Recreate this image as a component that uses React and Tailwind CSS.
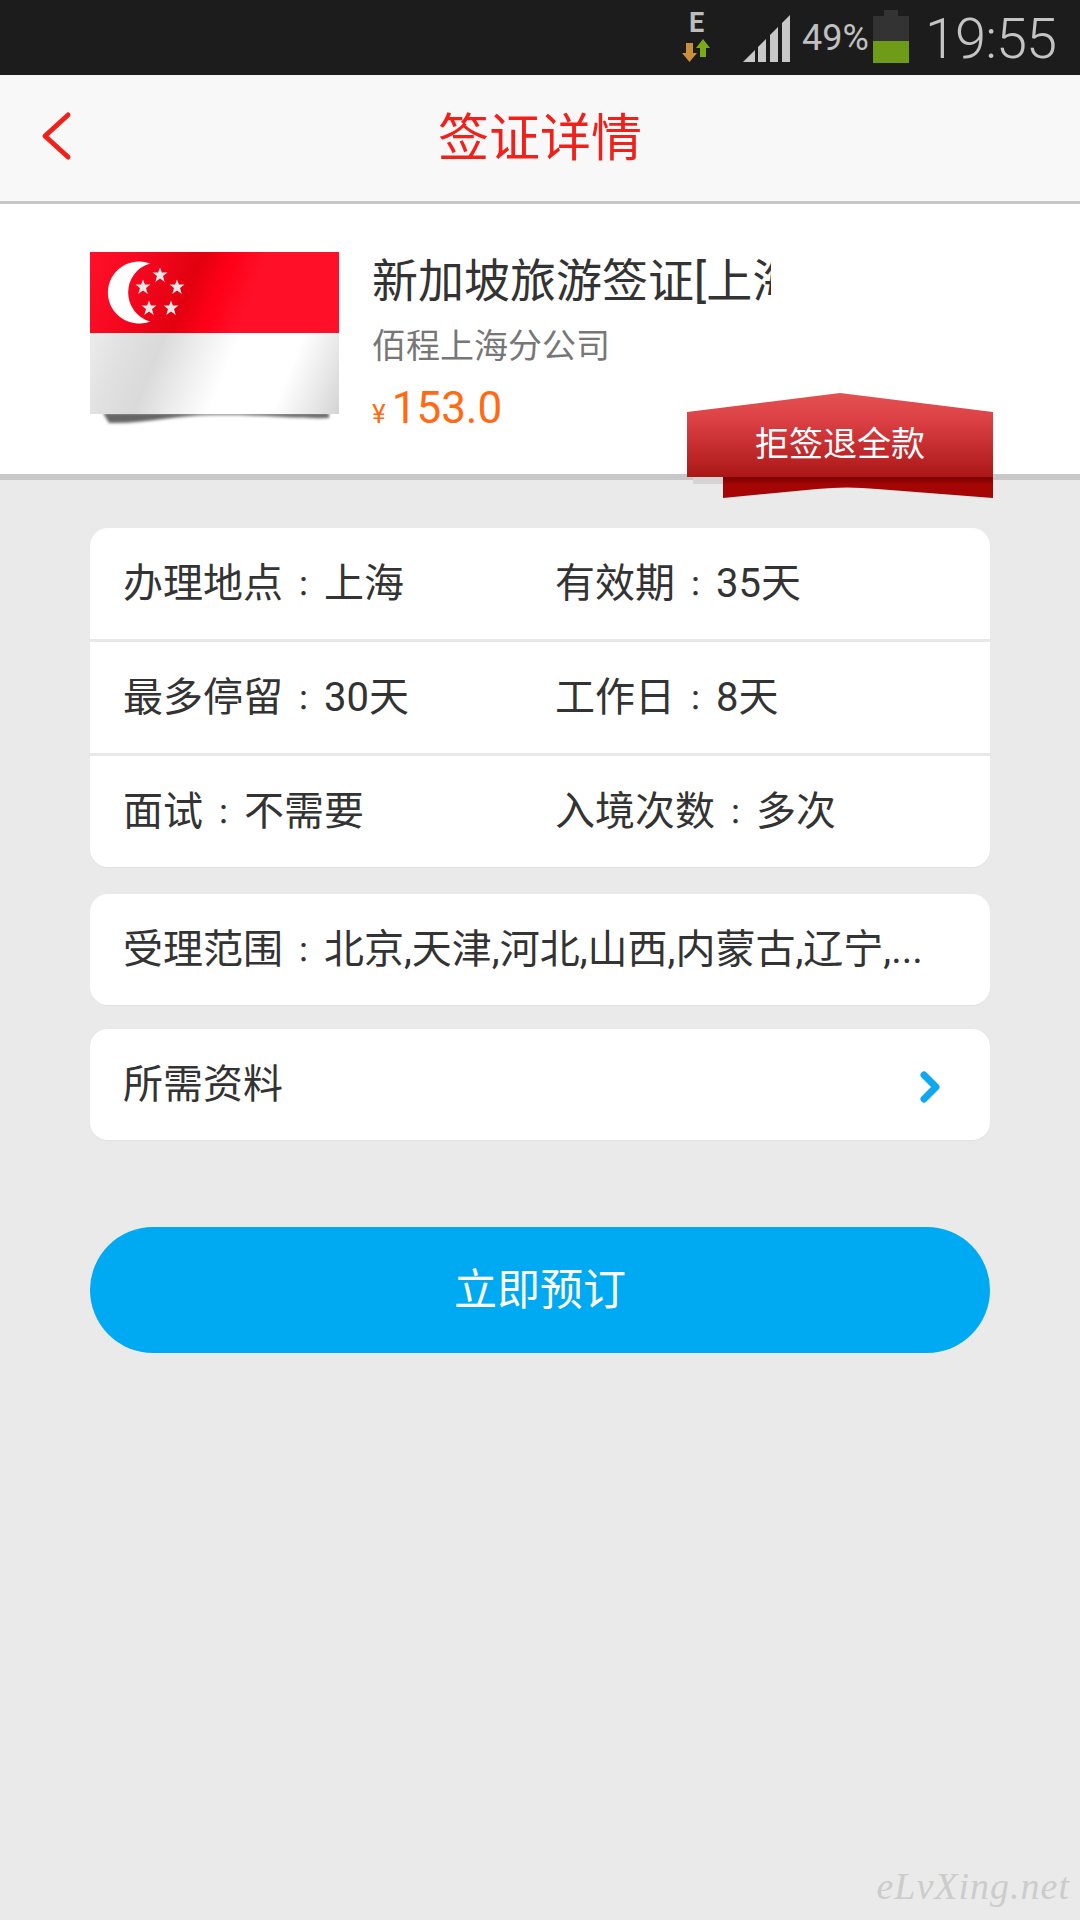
import React from "react";

const font = { fontFamily: 'Roboto, "Noto Sans CJK SC", sans-serif' };

// the reference draws the full-width colon small and centred in its box
function Colon() {
  return (
    <span
      className="inline-block w-[41px] text-center text-[28px] leading-none"
      style={{ fontFamily: '"Noto Sans CJK TC", sans-serif' }}
    >
      ：
    </span>
  );
}

function StatusIcons() {
  return (
    <div className="flex items-center h-full">
      <div className="relative w-[34px] h-[75px] mr-[28px]">
        <span className="absolute left-[8px] top-[6px] text-[27px] leading-[34px] font-bold text-[#bdbdbd]">E</span>
        <svg width="30" height="24" viewBox="0 0 30 24" className="absolute left-0 top-[39px]">
          <path d="M5 4h7v10h4l-7.5 9L1 14h4z" fill="#c98f3a" />
          <path d="M22 0l7 9h-4v9h-6V9h-4z" fill="#7cab1a" />
        </svg>
      </div>
      <svg width="48" height="48" viewBox="0 0 48 48" className="mr-[11px] mt-[2px]">
        <path d="M0 47 12 35V47Z" fill="#c8c8c8" />
        <path d="M15 32 23 24V47H15Z" fill="#c8c8c8" />
        <path d="M27 20 35 12V47H27Z" fill="#c8c8c8" />
        <path d="M39 8 47 0V47H39Z" fill="#c8c8c8" />
      </svg>
      <span className="text-[36px] leading-none text-[#c0c0c0] mr-[6px] w-[65px] whitespace-nowrap">49%</span>
      <svg width="36" height="53" viewBox="0 0 36 53" className="mr-[16px] mt-[-2px]">
        <rect x="11" y="0" width="14" height="7" fill="#333333" />
        <rect x="0" y="6" width="36" height="26" fill="#333333" />
        <rect x="0" y="31" width="36" height="22" fill="#6f9c18" />
      </svg>
      <span className="w-[131px] mr-[24px] mt-[2px] whitespace-nowrap text-[56px] leading-none tracking-[-1px] text-[#c4c4c4] font-light">19:55</span>
    </div>
  );
}

function Flag() {
  const stars = [
    [75, 23],
    [58, 35],
    [92, 35],
    [64, 56],
    [86, 56],
  ];
  return (
    <svg width="260" height="176" viewBox="0 0 260 176" className="shrink-0 ml-[-5px] mr-[-5px]">
      <defs>
        <linearGradient id="redFold" gradientUnits="userSpaceOnUse" x1="5" y1="0" x2="254" y2="101">
          <stop offset="0" stopColor="#ff1028" />
          <stop offset="0.2" stopColor="#f40820" />
          <stop offset="0.39" stopColor="#e2000f" />
          <stop offset="0.5" stopColor="#ff0018" />
          <stop offset="0.62" stopColor="#ff1028" />
          <stop offset="1" stopColor="#ff1028" />
        </linearGradient>
        <linearGradient id="whiteFold" gradientUnits="userSpaceOnUse" x1="5" y1="81" x2="254" y2="182">
          <stop offset="0" stopColor="#ececec" />
          <stop offset="0.14" stopColor="#e0e0e0" />
          <stop offset="0.26" stopColor="#dadada" />
          <stop offset="0.38" stopColor="#ececec" />
          <stop offset="0.52" stopColor="#ffffff" />
          <stop offset="0.74" stopColor="#ffffff" />
          <stop offset="0.88" stopColor="#e6e6e6" />
          <stop offset="0.98" stopColor="#d2d2d2" />
        </linearGradient>
        <filter id="soft" x="-5%" y="-50%" width="110%" height="200%">
          <feGaussianBlur stdDeviation="1.4" />
        </filter>
      </defs>
      <path d="M18 161H244V166C215 167 190 163 130 163C90 163 60 172 24 171Z" fill="#666666" filter="url(#soft)" />
      <rect x="5" y="0" width="249" height="81" fill="url(#redFold)" />
      <rect x="5" y="81" width="249" height="81" fill="url(#whiteFold)" />
      <path d="M65.1 11.6A31 31 0 1 0 65.1 69.4A30 30 0 0 1 65.1 11.6Z" fill="#ffffff" />
      {stars.map(([x, y], i) => (
        <path
          key={i}
          transform={`translate(${x} ${y})`}
          d="M0-7.5 1.9-2.5H7.5L3 1 4.7 7 0 3.5-4.7 7-3 1-7.5-2.5H-1.9Z"
          fill="#e8e8e8"
        />
      ))}
    </svg>
  );
}

function Ribbon() {
  return (
    <div className="absolute left-[687px] top-[393px] w-[306px] h-[105px]">
      <svg width="306" height="105" viewBox="0 0 306 105" className="absolute inset-0">
        <defs>
          <linearGradient id="ribbonFace" x1="0" y1="0" x2="0" y2="1">
            <stop offset="0" stopColor="#e45050" />
            <stop offset="0.3" stopColor="#dd4246" />
            <stop offset="1" stopColor="#ab1717" />
          </linearGradient>
          <linearGradient id="ribbonFold" x1="0" y1="0" x2="0" y2="1">
            <stop offset="0" stopColor="#7a0000" />
            <stop offset="1" stopColor="#a50505" />
          </linearGradient>
        </defs>
        <rect x="6" y="84" width="30" height="7" fill="#d4d4d4" />
        <path d="M36 84H306V105L190 96C170 94 150 94 130 96L36 105Z" fill="#a50505" />
        <rect x="36" y="84" width="270" height="8" fill="url(#ribbonFold)" />
        <path d="M0 19 153 0 306 19V84H0Z" fill="url(#ribbonFace)" />
      </svg>
      <span className="absolute inset-x-0 top-[31px] text-center text-[34px] leading-[40px] text-white">
        拒签退全款
      </span>
    </div>
  );
}

function InfoRow({ left, right, border }) {
  return (
    <div className={`flex items-center h-[111px] pl-[33px] ${border ? "border-b-[3px] border-[#e8e8e8] box-content" : ""}`}>
      <span className="w-[432px]">
        {left[0]}
        <Colon />
        {left[1]}
      </span>
      <span>
        {right[0]}
        <Colon />
        {right[1]}
      </span>
    </div>
  );
}

export default function App() {
  return (
    <div style={font} className="relative w-[1080px] h-[1920px] overflow-hidden bg-[#eaeaea] text-[#333333]">
      <div className="flex justify-end h-[75px] bg-[#1c1c1c]">
        <StatusIcons />
      </div>

      <div className="relative flex items-center justify-center h-[129px] bg-[#f8f8f8] border-b-[3px] border-[#c6c6c6]">
        <svg width="36" height="52" viewBox="0 0 36 52" className="absolute left-[39px] top-[35px]">
          <path d="M29 5 6 26l23 21" fill="none" stroke="#f0201a" strokeWidth="5" strokeLinecap="round" strokeLinejoin="round" />
        </svg>
        <h1 className="text-[51px] leading-none text-[#f0201a]">签证详情</h1>
      </div>

      <div className="flex h-[276px] pl-[90px] pt-[48px] bg-white border-b-[6px] border-[#c8c8c8]">
        <Flag />
        <div className="ml-[32px] w-[399px]">
          <div className="overflow-hidden whitespace-nowrap text-[46px] leading-[56px] h-[58px] pt-[1px]">新加坡旅游签证[上海]</div>
          <div className="mt-[16px] text-[34px] leading-[40px] text-[#777777]">佰程上海分公司</div>
          <div className="mt-[16px] leading-[52px] text-[#ff6a13]">
            <span className="text-[26px]">¥</span>
            <span className="ml-[6px] text-[44px]">153.0</span>
          </div>
        </div>
      </div>

      <div className="flex flex-col px-[90px] pt-[48px] text-[40px]">
        <div className="rounded-[18px] bg-white shadow-[0_1px_1px_#e2e2e2]">
          <InfoRow left={["办理地点", "上海"]} right={["有效期", "35天"]} border />
          <InfoRow left={["最多停留", "30天"]} right={["工作日", "8天"]} border />
          <InfoRow left={["面试", "不需要"]} right={["入境次数", "多次"]} />
        </div>

        <div className="mt-[27px] h-[111px] flex items-center pl-[33px] pr-[70px] rounded-[18px] bg-white shadow-[0_1px_1px_#e2e2e2]">
          <span className="whitespace-nowrap">
            受理范围
            <Colon />
            北京,天津,河北,山西,内蒙古,辽宁,...
          </span>
        </div>

        <div className="mt-[24px] h-[111px] flex items-center justify-between pl-[33px] pr-[48px] rounded-[18px] bg-white shadow-[0_1px_1px_#e2e2e2]">
          <span>所需资料</span>
          <svg width="22" height="32" viewBox="0 0 22 32" className="mt-[4px]">
            <path d="M4 4 16 16 4 28" fill="none" stroke="#0fa8ef" strokeWidth="7" strokeLinecap="round" strokeLinejoin="round" />
          </svg>
        </div>

        <button className="mt-[87px] h-[126px] rounded-[63px] bg-[#00aaf2] text-[43px] text-white">立即预订</button>
      </div>

      <Ribbon />

      <span
        style={{ fontFamily: '"Liberation Serif", serif' }}
        className="absolute right-[10px] bottom-[12px] text-[38px] leading-[44px] italic tracking-[1px] text-[#cccccc]"
      >
        eLvXing.net
      </span>
    </div>
  );
}
